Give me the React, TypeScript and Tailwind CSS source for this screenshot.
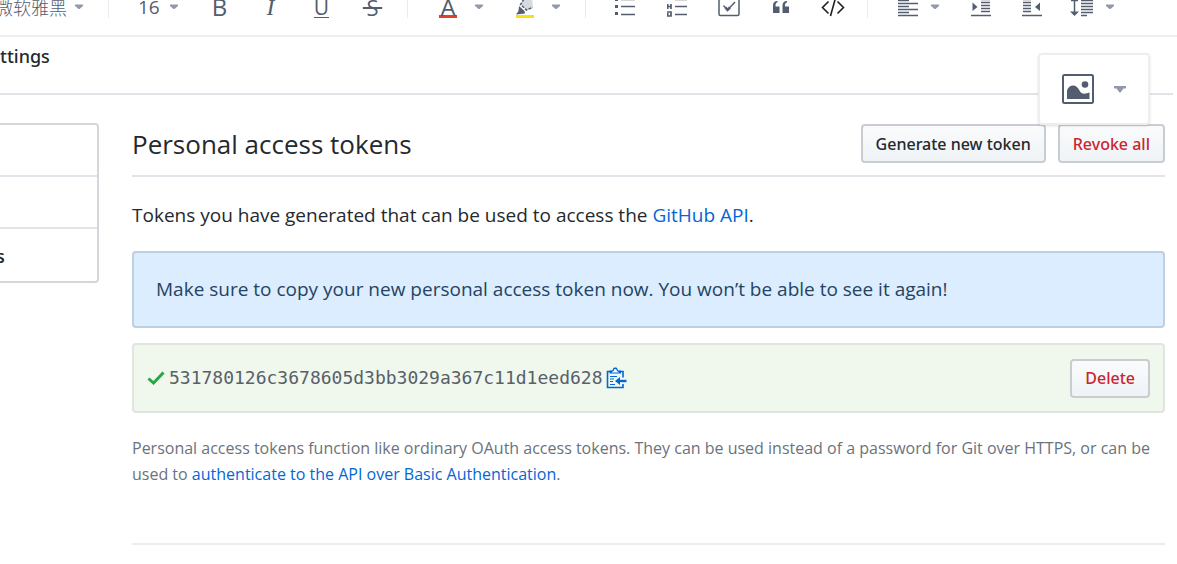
import type { ReactNode } from 'react';

const INK = '#535d70';

function Caret({ big = false }: { big?: boolean }) {
  return big ? (
    <svg width="12" height="8" viewBox="0 0 12 8" className="shrink-0" aria-hidden="true">
      <path d="M0 1h12v2.500H9.500L6.500 7.500h-1L2.500 3.500H0z" fill="#9299aa" />
    </svg>
  ) : (
    <svg width="8" height="6" viewBox="0 0 8 6" className="shrink-0" aria-hidden="true">
      <path d="M0 0.500h8v1.500L4.500 5h-1L0 2z" fill="#9299aa" />
    </svg>
  );
}

function Separator() {
  return <span className="h-[22px] w-px shrink-0 bg-[#ebebeb]" />;
}

function Tool({ label, className, children }: { label: string; className: string; children: ReactNode }) {
  return (
    <button type="button" aria-label={label} className={`flex h-9 shrink-0 items-center ${className}`}>
      {children}
    </button>
  );
}

function Icon({ width = 20, children }: { width?: number; children: ReactNode }) {
  return (
    <svg
      width={width}
      height="22"
      viewBox={`0 0 ${width} 22`}
      fill="none"
      stroke={INK}
      strokeWidth="1.5"
      className="shrink-0"
      aria-hidden="true"
    >
      {children}
    </svg>
  );
}

function Toolbar() {
  return (
    <div className="overflow-hidden border-b-2 border-[#eeeeee] pb-[10px] text-[#535d70]">
      <div className="-mt-[11px] flex h-9 items-center" role="toolbar" aria-label="Formatting">
        <div className="flex w-[108px] shrink-0 items-center">
          <div className="flex w-[67px] justify-end overflow-hidden">
            <select
              aria-label="Font"
              className="shrink-0 appearance-none bg-transparent font-['Noto_Sans_CJK_SC',sans-serif] text-[18px] leading-6 font-light"
            >
              <option>微软雅黑</option>
            </select>
          </div>
          <span className="pl-2">
            <Caret />
          </span>
        </div>
        <Separator />
        <div className="flex w-[85px] shrink-0 items-center gap-[10px] pl-[29px]">
          <select
            aria-label="Font size"
            className="w-[22px] appearance-none bg-transparent text-[19px] leading-6"
          >
            <option>16</option>
          </select>
          <Caret />
        </div>
        <Tool label="Bold" className="w-[51px] justify-center">
          <span className="text-[24px] leading-6">B</span>
        </Tool>
        <Tool label="Italic" className="w-[51px] justify-center">
          <span className="font-['Liberation_Serif',serif] text-[24px] leading-6 italic">I</span>
        </Tool>
        <Tool label="Underline" className="w-[51px] justify-center">
          <span className="border-b border-[#535d70] text-[21px] leading-[20px]">U</span>
        </Tool>
        <Tool label="Strikethrough" className="w-[51px] justify-center">
          <span className="text-[22px] leading-6 whitespace-pre line-through">{'\u2009S\u2009'}</span>
        </Tool>
        <span className="w-[9px] shrink-0" />
        <Separator />
        <Tool label="Text colour" className="w-[77px] gap-[17px] pl-[30px]">
          <span className="w-5 shrink-0 px-px">
            <span className="flex h-[22px] justify-center border-b-3 border-[#df402a] text-[24px] leading-[22px]">A</span>
          </span>
          <Caret />
        </Tool>
        <Tool label="Highlight colour" className="w-[77px] gap-[17px] pl-[30px]">
          <Icon>
            <path d="M8 4L17 2L18 12L12 14L6 8.500z" fill="#d5d9e0" stroke="none" />
            <path d="M9 3L5.500 8.500L11.500 14L17.500 11.500" strokeDasharray="3 1.200" />
            <path d="M4 10L9.500 15L10 17.500L1 18.500L3.500 15z" fill={INK} stroke="none" />
            <path d="M1 20.500h18" stroke="#f9e111" strokeWidth="3" />
          </Icon>
          <Caret />
        </Tool>
        <span className="w-[23px] shrink-0" />
        <Separator />
        <span className="w-[13px] shrink-0" />
        <Tool label="Bulleted list" className="w-[52px] justify-center">
          <Icon>
            <path d="M6 3.500h14M6 10.500h14M6 18.500h14" />
            <path d="M0 3.500h3M0 10.500h3M0 17.500h3" strokeWidth="3" />
          </Icon>
        </Tool>
        <Tool label="Numbered list" className="w-[52px] justify-center">
          <Icon>
            <path d="M8 3.500h12M8 10.500h12M8 18.500h12" />
            <path d="M2.500 0v4M0.700 8v5M4 8v5M0 10.500h4.500M0 16h4v4H0.700v-3" strokeWidth="1.700" />
          </Icon>
        </Tool>
        <Tool label="Task list" className="w-[52px] justify-center">
          <Icon width={22}>
            <rect x="1" y="-1" width="20" height="20.500" rx="1.500" />
            <path d="M5.500 9.500l4 4.500L17 6" />
            <path d="M7.500 11.500l2 2.500L12 11.500" strokeWidth="2.500" />
          </Icon>
        </Tool>
        <Tool label="Quote" className="w-[52px] justify-center">
          <Icon width={16}>
            <path
              d="M0 17V9.500C0 6.500 1.500 5 4.500 5v1.500C3 6.500 2.500 7.500 2.500 10.500H6.500V17zM9.500 17V9.500C9.500 6.500 11 5 14 5v1.500c-1.500 0-2 1-2 4H16V17z"
              fill={INK}
              stroke="none"
            />
          </Icon>
        </Tool>
        <Tool label="Code" className="w-[52px] justify-center">
          <Icon width={24}>
            <path
              d="M7.500 5.500L1.500 11.500L7.500 17.500M16.500 5.500L22.500 11.500L16.500 17.500M14.500 2L9.500 20"
              stroke="#1f2023"
              strokeWidth="1.600"
            />
          </Icon>
        </Tool>
        <span className="w-2 shrink-0" />
        <Separator />
        <Tool label="Align" className="w-[87px] gap-[13px] pl-[30px]">
          <Icon>
            <path d="M0 4.500h11M0 7.500h20M0 10.500h11M0 13.500h20M0 16.500h11M0 19.500h20" strokeWidth="1.300" />
          </Icon>
          <Caret />
        </Tool>
        <Tool label="Increase indent" className="w-[51px] justify-center">
          <Icon>
            <path d="M10 3.500h9M10 6.500h9M10 9.500h9M10 12.500h9M10 15.500h9M0 19.500h20" strokeWidth="1.300" />
            <path d="M1.500 6.500l5 4.500l-5 4z" fill={INK} stroke="none" />
          </Icon>
        </Tool>
        <Tool label="Decrease indent" className="w-[51px] justify-center">
          <Icon>
            <path d="M1 3.500h8M1 6.500h8M1 9.500h8M1 12.500h8M1 15.500h8M0 19.500h20" strokeWidth="1.300" />
            <path d="M18 6.500l-5 4.500l5 4z" fill={INK} stroke="none" />
          </Icon>
        </Tool>
        <Tool label="Line height" className="gap-3 pl-[13px]">
          <Icon width={24}>
            <path d="M11 4.500h12M11 7.500h12M11 10.500h12M11 13.500h12M11 16.500h12M11 19.500h6" strokeWidth="1.300" />
            <path d="M4.500 3v14M1 4.500h7" />
            <path d="M0 15.500h9l-4.500 4.500z" fill={INK} stroke="none" />
          </Icon>
          <Caret />
        </Tool>
      </div>
    </div>
  );
}

function Button({ danger = false, children }: { danger?: boolean; children: ReactNode }) {
  return (
    <button
      type="button"
      className={`h-[39px] shrink-0 rounded-[4px] border-2 border-[#c9cdd1] bg-linear-to-b from-[#fafbfc] to-[#eff3f6] px-[13px] font-['Noto_Sans',sans-serif] text-[16px] leading-6 font-medium whitespace-nowrap ${
        danger ? 'text-[#cb2431]' : 'text-[#24292e]'
      }`}
    >
      {children}
    </button>
  );
}

function ImageMenu() {
  return (
    <button
      type="button"
      aria-label="Image options"
      className="absolute top-[53px] right-[27px] flex h-[72px] w-[112px] items-center gap-5 rounded-[4px] border-2 border-[#eeeeee] bg-white/95 pl-[22px] shadow-sm"
    >
      <svg width="32" height="30" viewBox="0 0 32 30" fill={INK} className="shrink-0" aria-hidden="true">
        <rect x="1" y="1" width="30" height="28" rx="1.500" fill="none" stroke={INK} strokeWidth="2" />
        <path d="M5 25V16.500C6 13 8.500 11.500 11 11.500C14 11.500 16 13.500 17.500 16.500C19 19.500 21 20 24 19.500L27.500 18.500V25z" />
        <circle cx="23" cy="10.500" r="3.300" />
      </svg>
      <Caret big />
    </button>
  );
}

export default function App() {
  return (
    <div className="relative min-h-screen overflow-hidden bg-white font-['Open_Sans',sans-serif] text-[#24292e]">
      <Toolbar />
      <header className="mr-1 border-b-2 border-[#e1e4e8] pt-[7px] pb-[25px]">
        <div className="font-['Noto_Sans',sans-serif] text-[18px] leading-6 font-medium">ttings</div>
      </header>

      <div className="flex items-start gap-[33px] pt-7 pr-3">
        <nav
          aria-label="Settings sections"
          className="w-[99px] shrink-0 divide-y-2 divide-[#e1e4e8] rounded-r-[4px] border-2 border-l-0 border-[#d3d7dc] text-[18px] leading-[54px] font-semibold"
        >
          <a href="#apps" className="block h-[52px]" aria-label="First section" />
          <a href="#oauth" className="block h-[52px]" aria-label="Second section" />
          <a href="#tokens" className="-ml-1 block h-[52px]">
            s
          </a>
        </nav>

        <main className="min-w-0 flex-1">
          <div className="flex items-start justify-between border-b-2 border-[#e1e4e8] pb-[9px]">
            <h1 className="text-[26px] leading-[43px]">Personal access tokens</h1>
            <div className="flex gap-3 pt-px">
              <Button>Generate new token</Button>
              <Button danger>Revoke all</Button>
            </div>
          </div>

          <p className="pt-6 text-[19px] leading-7">
            Tokens you have generated that can be used to access the{' '}
            <a href="#api" className="text-[#0366d6]">
              GitHub API
            </a>
            .
          </p>

          <div className="mt-[22px] rounded-[4px] border-2 border-[#bcd0e2] bg-[#dbedff] px-[22px] py-[22px] text-[19px] leading-[29px] text-[#264362]">
            Make sure to copy your new personal access token now. You won’t be able to see it again!
          </div>

          <div className="mt-[15px] flex h-[70px] items-center rounded-[4px] border-2 border-[#e0e5e0] bg-[#f0f8ed] px-[13px]">
            <svg width="18" height="14" viewBox="0 0 18 14" className="shrink-0" aria-hidden="true">
              <path d="M1.500 7.500L6.500 12L16.500 1.500" fill="none" stroke="#28a745" strokeWidth="3" />
            </svg>
            <code className="pl-1 font-['DejaVu_Sans_Mono',monospace] text-[18px] leading-6 text-[#586069]">
              531780126c3678605d3bb3029a367c11d1eed628
            </code>
            <button type="button" aria-label="Copy token" className="ml-1">
              <svg width="21" height="22" viewBox="0 0 21 22" fill="none" stroke="#0366d6" aria-hidden="true">
                <path d="M17 10.500V4.500H1.500V20.500H17V17" strokeWidth="1.600" />
                <path d="M3.500 6.500V3.500H6.500C7 1 8 .500 9.300 .500S11.500 1 12 3.500H15V6.500z" fill="#0366d6" stroke="none" />
                <path
                  d="M5.500 5.500C6 4.500 7.500 4.500 8 3C8.200 1.700 10.300 1.700 10.500 3C11 4.500 12.500 4.500 13 5.500z"
                  fill="#f0f8ed"
                  stroke="none"
                />
                <path d="M4 9.500h7M4 12h4M4 14.500h3M4 17.500h5" strokeWidth="1.200" />
                <path d="M20.500 14H13" strokeWidth="2.400" />
                <path d="M9 14l5-4v8z" fill="#0366d6" stroke="none" />
              </svg>
            </button>
            <span className="flex-1" />
            <Button danger>Delete</Button>
          </div>

          <p className="pt-[22px] text-[16px] leading-[26px] text-[#6a737d]">
            Personal access tokens function like ordinary OAuth access tokens. They can be used instead of a password
            for Git over HTTPS, or can be used to{' '}
            <a href="#auth" className="text-[#0366d6]">
              authenticate to the API over Basic Authentication
            </a>
            .
          </p>
          <hr className="mt-[56px] border-t-2 border-[#eaecef]" />
        </main>
      </div>
      <ImageMenu />
    </div>
  );
}
